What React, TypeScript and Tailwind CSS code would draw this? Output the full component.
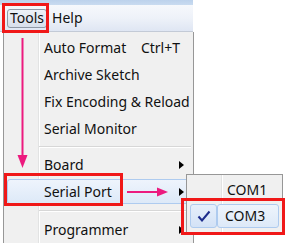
import React from "react";

const Tri = () => (
  <svg width="5" height="8" viewBox="0 0 5 8" className="shrink-0">
    <polygon points="0,0 5,4 0,8" fill="#000" />
  </svg>
);

function Item({ label, shortcut, sub, hl }: { label: string; shortcut?: string; sub?: boolean; hl?: boolean }) {
  return (
    <div className="relative h-[27px] px-[3px] py-[1px] flex">
      <div
        className={`flex-1 flex items-center pl-[36px] rounded-[3px] border whitespace-nowrap ${
          hl ? "border-[#aecbef] bg-gradient-to-b from-[#eef4fc] to-[#dde9f8]" : "border-transparent"
        } ${shortcut ? "pr-[9px]" : "pr-[5px]"}`}
      >
        <span className="flex-1">{label}</span>
        {shortcut && <span>{shortcut}</span>}
        {sub && <Tri />}
      </div>
    </div>
  );
}

function Sep({ h }: { h: string }) {
  return (
    <div className={`${h} pl-[35px] pr-[2px] flex flex-col justify-center`}>
      <div className="h-[1px] bg-[#d7d7d7]" />
      <div className="h-[1px] bg-white" />
    </div>
  );
}

export default function App() {
  return (
    <div
      className="relative w-[289px] h-[243px] bg-white overflow-hidden text-[14px] text-[#111]"
      style={{ fontFamily: '"Noto Sans", "Open Sans", sans-serif' }}
    >
      {/* menu bar */}
      <div className="w-[193px] h-[32px] flex flex-col">
        <div className="h-[5px] bg-gradient-to-b from-[#bcd2ec] to-[#c9dbf0]" />
        <div className="flex-1 bg-gradient-to-b from-[#f6f8fc] via-[#eef2f9] to-[#dfe6f3] border-b border-[#c3cad6] flex items-center gap-[5px] pl-[7px]">
          <div className="h-[19px] px-[2px] flex items-center rounded-[3px] border border-[#8f99a6] bg-gradient-to-b from-[#eef2f8] to-[#d7dfeb] leading-none">
            Tools
          </div>
          <div className="leading-none">Help</div>
        </div>
      </div>

      {/* dropdown */}
      <div className="absolute left-[3px] top-[32px] w-[191px] h-[215px] bg-[#f0f0f0] border-l border-r border-[#979797] leading-none">
        <div className="absolute left-[34px] top-0 bottom-0 w-[1px] bg-[#e2e3e3]" />
        <div className="absolute left-[35px] top-0 bottom-0 w-[1px] bg-white" />
        <div className="relative pt-[2px] flex flex-col">
          <Item label="Auto Format" shortcut="Ctrl+T" />
          <Item label="Archive Sketch" />
          <Item label="Fix Encoding & Reload" />
          <Item label="Serial Monitor" />
          <Sep h="h-[9px]" />
          <Item label="Board" sub />
          <Item label="Serial Port" sub hl />
          <Sep h="h-[11px]" />
          <Item label="Programmer" sub />
        </div>
      </div>

      {/* submenu */}
      <div className="absolute left-[186px] top-[174px] w-[97px] h-[59px] bg-[#f0f0f0] border border-[#979797] leading-none">
        <div className="absolute left-[34px] top-0 bottom-0 w-[1px] bg-[#e2e3e3]" />
        <div className="absolute left-[35px] top-0 bottom-0 w-[1px] bg-white" />
        <div className="relative pt-[2px] flex flex-col">
          <div className="h-[26px] flex items-center pl-[40px]">COM1</div>
          <div className="h-[26px] px-[3px] py-[1px] flex">
            <div className="w-[27px] flex items-center justify-center rounded-[3px] border border-[#aecbef] bg-gradient-to-b from-[#e6effb] to-[#d3e2f6]">
              <svg width="14" height="12" viewBox="0 0 14 12">
                <path d="M1.5 6.5 L5 10.5 L12.5 1.5" fill="none" stroke="#1c2c8c" strokeWidth="2" />
              </svg>
            </div>
            <div className="flex-1 flex items-center pl-[7px] rounded-[3px] border border-[#aecbef] bg-gradient-to-b from-[#eef4fc] to-[#dde9f8]">
              COM3
            </div>
          </div>
        </div>
      </div>

      {/* annotations */}
      <div className="absolute left-[2px] top-[3px] w-[47px] h-[30px] border-[3px] border-[#f01818]" />
      <div className="absolute left-[4px] top-[173px] w-[119px] h-[33px] border-[3px] border-[#f01818]" />
      <div className="absolute left-[181px] top-[198px] w-[104px] h-[37px] border-[3px] border-[#f01818]" />
      <svg className="absolute left-0 top-0" width="289" height="243" viewBox="0 0 289 243">
        <line x1="22.5" y1="38" x2="22.5" y2="158" stroke="#ec1a7e" strokeWidth="2" />
        <polygon points="17.5,155 27.5,155 22.5,168" fill="#ec1a7e" />
        <line x1="127" y1="192" x2="160" y2="192" stroke="#ec1a7e" strokeWidth="2" />
        <polygon points="157,187.5 157,196.5 168,192" fill="#ec1a7e" />
      </svg>
    </div>
  );
}
